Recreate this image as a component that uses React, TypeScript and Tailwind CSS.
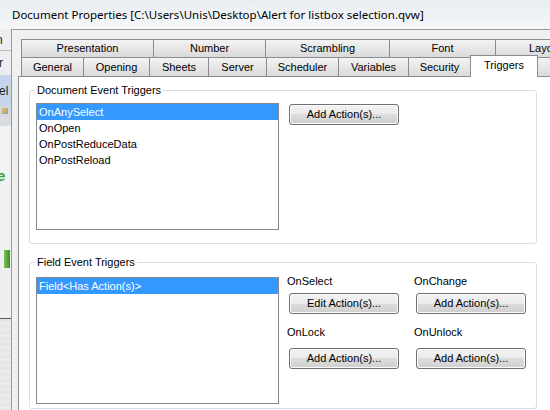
import React from 'react';

const row1 = [
  { label: 'Presentation', w: 'w-[132px]' },
  { label: 'Number', w: 'w-[112px]' },
  { label: 'Scrambling', w: 'w-[124px]' },
  { label: 'Font', w: 'w-[106px]' },
  { label: 'Layout', w: 'w-[100px]' },
];

const row2 = [
  { label: 'General', w: 'w-[62px]' },
  { label: 'Opening', w: 'w-[66px]' },
  { label: 'Sheets', w: 'w-[59px]' },
  { label: 'Server', w: 'w-[58px]' },
  { label: 'Scheduler', w: 'w-[72px]' },
  { label: 'Variables', w: 'w-[70px]' },
  { label: 'Security', w: 'w-[62px]' },
];

const docEvents = ['OnAnySelect', 'OnOpen', 'OnPostReduceData', 'OnPostReload'];

function WinButton({ children, className = '' }: { children: React.ReactNode; className?: string }) {
  return (
    <button
      type="button"
      className={`flex h-[21px] w-[110px] shrink-0 items-center justify-center rounded-[3px] border border-[#707070] bg-[linear-gradient(to_bottom,#f2f2f2_0%,#ebebeb_50%,#dddddd_50%,#cfcfcf_100%)] text-[11px] leading-none text-black shadow-[inset_0_0_0_1px_#fcfcfc] ${className}`}
    >
      {children}
    </button>
  );
}

function ListBox({ items, selected, className = '' }: { items: string[]; selected: number; className?: string }) {
  return (
    <div className={`w-[243px] shrink-0 border border-[#828790] bg-white ${className}`}>
      {items.map((item, i) => (
        <div
          key={item}
          className={`flex h-[16px] items-center pl-[2px] ${i === selected ? 'bg-[#3399ff] text-white' : 'text-black'}`}
        >
          {item}
        </div>
      ))}
    </div>
  );
}

function GroupBox({ title, className = '', children }: { title: string; className?: string; children: React.ReactNode }) {
  return (
    <div className={`relative ml-[10px] w-[508px] rounded-[3px] border border-[#d5dfe5] ${className}`}>
      <span className="absolute -top-[7px] left-[5px] bg-white px-[2px] leading-[13px]">{title}</span>
      {children}
    </div>
  );
}

// glimpse of the application window behind the dialog glass frame
function BackdropStrip() {
  return (
    <div className="flex w-[11px] shrink-0 flex-col overflow-hidden bg-[#eceef0] text-[12px] leading-none text-[#1e1e1e]">
      <div className="flex h-[21px] items-center -ml-[4px]">n</div>
      <div className="h-px bg-[#b9bdc2]" />
      <div className="flex h-[24px] items-center -ml-[1px]">r</div>
      <div className="flex h-[31px] items-center bg-[#c6d6ea] -ml-[1px]">el</div>
      <div className="flex h-[10px] items-center bg-[#d3d9e0] pl-[2px]">
        <div className="h-[6px] w-[6px] bg-[linear-gradient(135deg,#e8c55a,#9a9a9a)]" />
      </div>
      <div className="h-[10px] bg-[#d9dde2]" />
      <div className="h-[39px] bg-[#f1f2f3]" />
      <div className="flex h-[20px] items-center bg-[#f1f2f3] -ml-[3px] text-[15px] font-bold text-[#3f9f2d]">e</div>
      <div className="h-[65px] bg-[#eff0f1]" />
      <div className="flex h-[18px] bg-[#eff0f1]">
        <div className="ml-[4px] w-[6px] bg-[linear-gradient(to_right,#7cc05a,#3d8f22)]" />
      </div>
      <div className="h-[50px] bg-[#eeeff0]" />
      <div className="h-px bg-[#5a5a5a]" />
      <div className="flex-1 bg-[repeating-linear-gradient(to_bottom,#e4e5e6_0px,#e4e5e6_3px,#eaebec_3px,#eaebec_6px)]" />
    </div>
  );
}

export default function App() {
  return (
    <div className="flex h-[410px] w-[550px] flex-col overflow-hidden bg-[#eef1f4] font-['Liberation_Sans',Arial,sans-serif] text-[11px] text-black">
      {/* Title bar */}
      <div className="flex h-[29px] shrink-0 items-center bg-[linear-gradient(to_bottom,#e9edf1,#f5f7f9)] pl-[12px]">
        <span className="font-['Noto_Sans',sans-serif] text-[11.5px] text-black">
          Document Properties [C:\Users\Unis\Desktop\Alert for listbox selection.qvw]
        </span>
      </div>

      <div className="flex min-h-0 flex-1">
        <BackdropStrip />

        {/* Dialog client area */}
        <div className="flex min-w-0 flex-1 flex-col border-l border-t border-[#9a9a9a] bg-[#f0f0f0] pt-[9px]">
          {/* Tab row 1 */}
          <div className="ml-[9px] flex h-[18px] shrink-0">
            {row1.map((t) => (
              <div
                key={t.label}
                className={`${t.w} flex shrink-0 items-center justify-center border-l border-t border-[#898c95] bg-[linear-gradient(to_bottom,#f3f3f3,#dadada)]`}
              >
                {t.label}
              </div>
            ))}
          </div>

          {/* Tab row 2 */}
          <div className="ml-[9px] flex h-[19px] shrink-0 items-end">
            {row2.map((t) => (
              <div
                key={t.label}
                className={`${t.w} flex h-[19px] shrink-0 items-center justify-center border-l border-t border-[#898c95] bg-[linear-gradient(to_bottom,#f3f3f3,#dadada)]`}
              >
                {t.label}
              </div>
            ))}
            <div className="relative z-10 -mb-px flex h-[22px] w-[68px] shrink-0 items-center justify-center border-x border-t border-[#898c95] bg-white pb-[3px]">
              Triggers
            </div>
            <div className="flex h-[19px] w-[70px] shrink-0 items-center justify-center border-t border-[#898c95] bg-[linear-gradient(to_bottom,#f3f3f3,#dadada)]">
              Groups
            </div>
          </div>

          {/* Tab page */}
          <div className="ml-[6px] flex min-h-0 flex-1 flex-col border-l border-t border-[#898c95] bg-white">
            <GroupBox title="Document Event Triggers" className="mt-[13px] h-[154px] shrink-0">
              <div className="flex pl-[6px] pt-[12px]">
                <ListBox items={docEvents} selected={0} className="h-[127px]" />
                <WinButton className="ml-[10px] mt-px">Add Action(s)...</WinButton>
              </div>
            </GroupBox>

            <GroupBox title="Field Event Triggers" className="mt-[18px] h-[147px] shrink-0">
              <div className="flex items-start pl-[6px] pt-[14px]">
                <ListBox items={['Field<Has Action(s)>']} selected={0} className="h-[127px]" />
                <div className="ml-[8px] -mt-[2px] grid grid-cols-[112px_112px] gap-x-[15px]">
                  <div className="flex flex-col">
                    <span className="leading-[13px]">OnSelect</span>
                    <WinButton className="ml-[2px] mt-[5px]">Edit Action(s)...</WinButton>
                    <span className="mt-[12px] leading-[13px]">OnLock</span>
                    <WinButton className="ml-[2px] mt-[9px]">Add Action(s)...</WinButton>
                  </div>
                  <div className="flex flex-col">
                    <span className="leading-[13px]">OnChange</span>
                    <WinButton className="ml-[2px] mt-[5px]">Add Action(s)...</WinButton>
                    <span className="mt-[12px] leading-[13px]">OnUnlock</span>
                    <WinButton className="ml-[2px] mt-[9px]">Add Action(s)...</WinButton>
                  </div>
                </div>
              </div>
            </GroupBox>
          </div>
        </div>
      </div>
    </div>
  );
}
